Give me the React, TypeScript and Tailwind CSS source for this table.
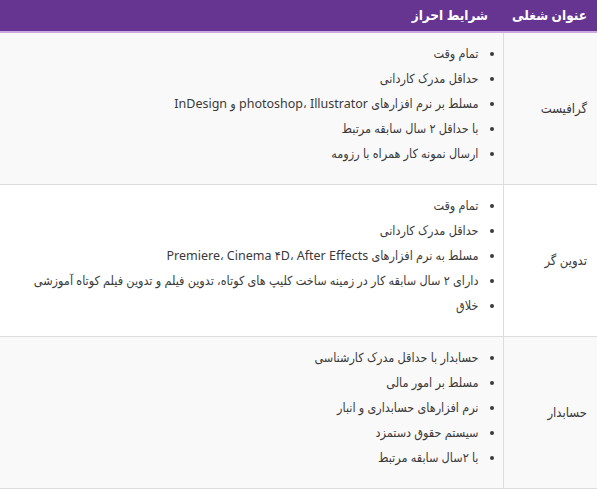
const rows = [
  {
    title: "گرافیست",
    items: [
      "تمام وقت",
      "حداقل مدرک کاردانی",
      "مسلط بر نرم افزارهای photoshop، Illustrator و InDesign",
      "با حداقل ۲ سال سابقه مرتبط",
      "ارسال نمونه کار همراه با رزومه",
    ],
  },
  {
    title: "تدوین گر",
    items: [
      "تمام وقت",
      "حداقل مدرک کاردانی",
      "مسلط به نرم افزارهای Premiere، Cinema ۴D، After Effects",
      "دارای ۲ سال سابقه کار در زمینه ساخت کلیپ های کوتاه، تدوین فیلم و تدوین فیلم کوتاه آموزشی",
      "خلاق",
    ],
  },
  {
    title: "حسابدار",
    items: [
      "حسابدار با حداقل مدرک کارشناسی",
      "مسلط بر امور مالی",
      "نرم افزارهای حسابداری و انبار",
      "سیستم حقوق دستمزد",
      "با ۲سال سابقه مرتبط",
    ],
  },
]

export default function App() {
  return (
    <div dir="rtl" className="min-h-screen bg-white font-['Noto_Sans','DejaVu_Sans_Condensed','DejaVu_Sans',sans-serif] text-[12.5px] text-[#3a3a3a]">
      <table className="w-full border-collapse">
        <thead>
          <tr className="h-[32px] bg-[#663592] text-white">
            <th className="w-[94px] whitespace-nowrap border-b-2 border-[#c9a9e3] pr-[10px] text-right text-[13.5px] font-bold">عنوان شغلی</th>
            <th className="whitespace-nowrap border-b-2 border-[#c9a9e3] pr-[15px] text-right text-[13.5px] font-bold">شرایط احراز</th>
          </tr>
        </thead>
        <tbody>
          {rows.map((row, idx) => (
            <tr key={row.title} className={idx % 2 === 0 ? "bg-[#f9f9f9]" : "bg-white"}>
              <td className="border-b border-l border-[#dddddd] pr-[10px] align-middle text-[13px]">{row.title}</td>
              <td className="border-b border-[#dddddd] pb-[18px] pl-[8px] pr-[12px] pt-[8px]">
                <ul className="list-disc pr-[12px] leading-[25px]">
                  {row.items.map((item) => (
                    <li key={item} className="whitespace-nowrap">{item}</li>
                  ))}
                </ul>
              </td>
            </tr>
          ))}
        </tbody>
      </table>
    </div>
  )
}
